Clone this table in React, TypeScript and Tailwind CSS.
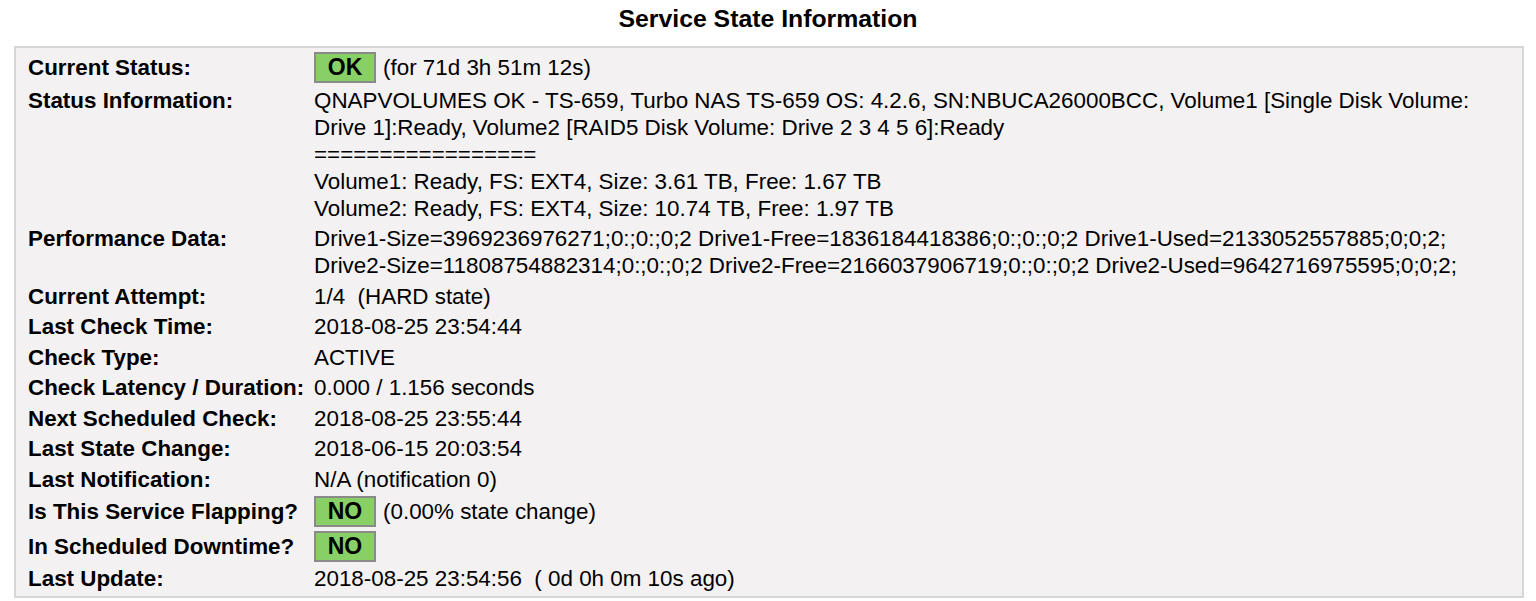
import React from "react";

const Badge = ({ text }: { text: string }) => (
  <span className="inline-flex items-center justify-center w-[62px] h-[31px] bg-[#88d066] border-2 border-[#8a8a8a] font-bold text-[23px] text-black align-middle">
    {text}
  </span>
);

type Row = { label: string; value: React.ReactNode; pad?: string };

const rows: Row[] = [
  {
    label: "Current Status:",
    pad: "pt-[1px] pb-[2px] flex items-center",
    value: (
      <span className="flex items-center gap-[7px]">
        <Badge text="OK" />
        <span>(for 71d 3h 51m 12s)</span>
      </span>
    ),
  },
  {
    label: "Status Information:",
    value: (
      <div>
        <div>
          QNAPVOLUMES OK - TS-659, Turbo NAS TS-659 OS: 4.2.6, SN:NBUCA26000BCC, Volume1 [Single Disk Volume:
        </div>
        <div>Drive 1]:Ready, Volume2 [RAID5 Disk Volume: Drive 2 3 4 5 6]:Ready</div>
        <div>=================</div>
        <div>Volume1: Ready, FS: EXT4, Size: 3.61 TB, Free: 1.67 TB</div>
        <div>Volume2: Ready, FS: EXT4, Size: 10.74 TB, Free: 1.97 TB</div>
      </div>
    ),
  },
  {
    label: "Performance Data:",
    value: (
      <div>
        <div>
          Drive1-Size=3969236976271;0:;0:;0;2 Drive1-Free=1836184418386;0:;0:;0;2 Drive1-Used=2133052557885;0;0;2;
        </div>
        <div>
          Drive2-Size=11808754882314;0:;0:;0;2 Drive2-Free=2166037906719;0:;0:;0;2 Drive2-Used=9642716975595;0;0;2;
        </div>
      </div>
    ),
  },
  { label: "Current Attempt:", value: <span className="whitespace-pre">1/4  (HARD state)</span> },
  { label: "Last Check Time:", value: "2018-08-25 23:54:44" },
  { label: "Check Type:", value: "ACTIVE" },
  { label: "Check Latency / Duration:", value: "0.000 / 1.156 seconds" },
  { label: "Next Scheduled Check:", value: "2018-08-25 23:55:44" },
  { label: "Last State Change:", value: "2018-06-15 20:03:54" },
  { label: "Last Notification:", value: "N/A (notification 0)" },
  {
    label: "Is This Service Flapping?",
    pad: "py-[1px] flex items-center",
    value: (
      <span className="flex items-center gap-[7px]">
        <Badge text="NO" />
        <span>(0.00% state change)</span>
      </span>
    ),
  },
  {
    label: "In Scheduled Downtime?",
    pad: "pt-[3px] pb-[2px] flex items-center",
    value: (
      <span className="flex items-center">
        <Badge text="NO" />
      </span>
    ),
  },
  {
    label: "Last Update:",
    value: <span className="whitespace-pre">2018-08-25 23:54:56  ( 0d 0h 0m 10s ago)</span>,
  },
];

export default function App() {
  return (
    <div className="w-[1536px] h-[601px] bg-white text-black font-['Liberation_Sans',Arial,sans-serif] overflow-hidden">
      <div className="h-[38px] leading-[38px] text-center text-[24.8px] font-bold mb-[8px]">
        Service State Information
      </div>
      <div className="ml-[14px] w-[1510px] border-2 border-[#d6d6d6] bg-[#f3f1f2] pt-[3px] pb-[2px] text-[22.4px] leading-[27px]">
        {rows.map((r, i) => {
          const pad = r.pad ?? "py-[1.75px]";
          return (
            <div key={i} className="grid grid-cols-[286px_1fr] pl-[12px]">
              <div className={`font-bold ${pad}`}>{r.label}</div>
              <div className={pad}>{r.value}</div>
            </div>
          );
        })}
      </div>
    </div>
  );
}
